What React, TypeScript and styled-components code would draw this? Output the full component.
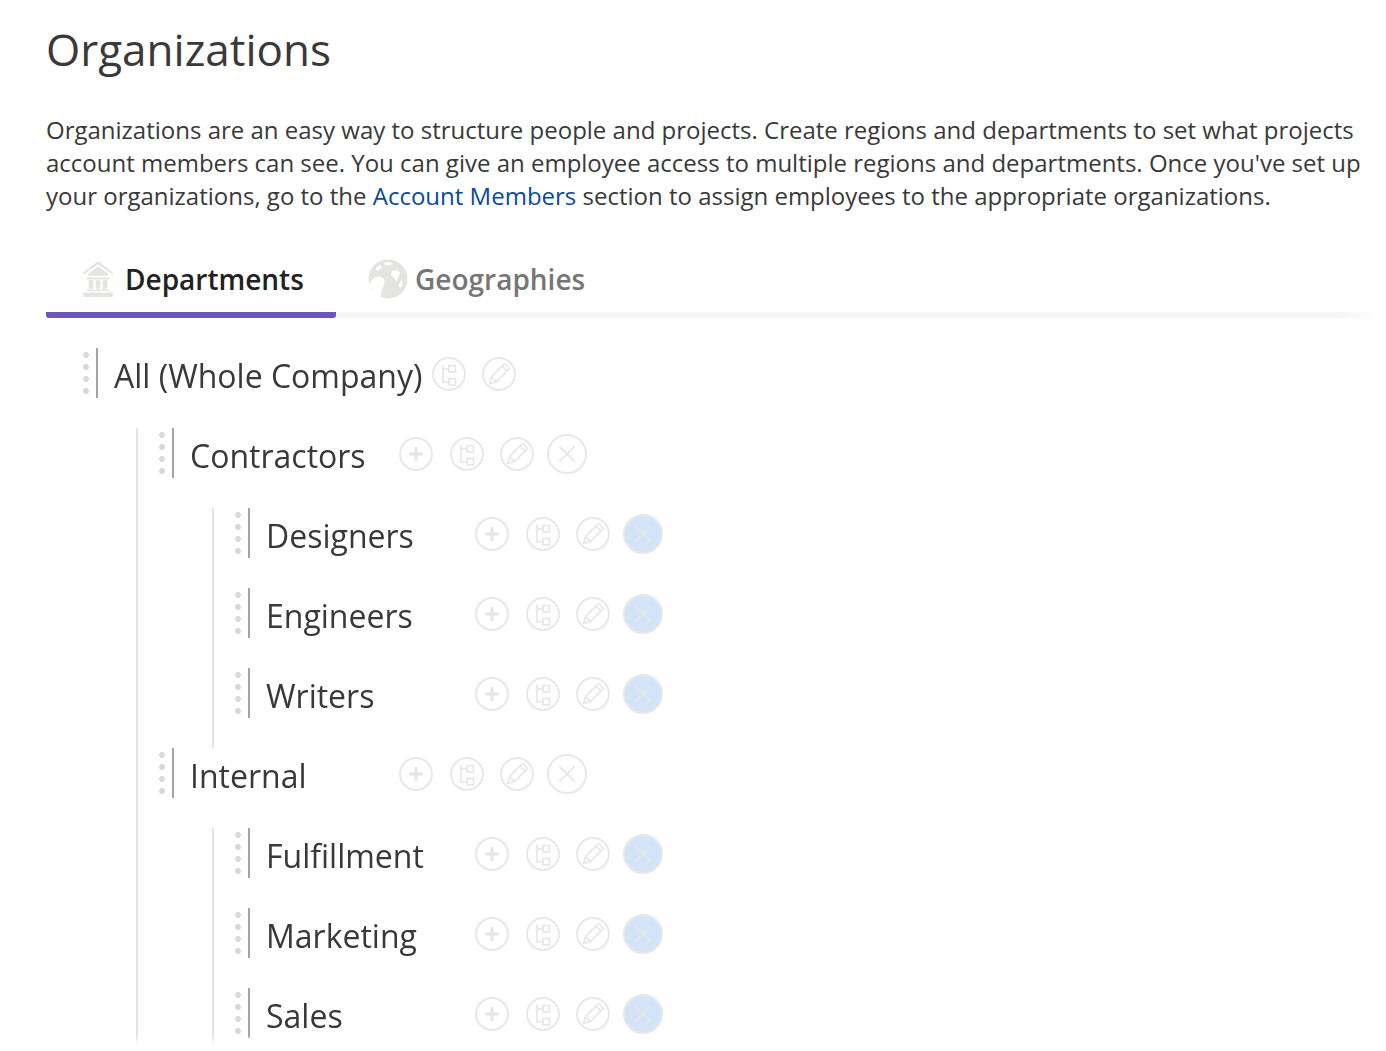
import React from "react";
import styled, { createGlobalStyle } from "styled-components";

const Global = createGlobalStyle`
  html, body { margin: 0; padding: 0; background: #fff; height: 1051px; overflow: hidden; }
  body { font-family: "Open Sans", "Liberation Sans", sans-serif; color: #393939; }
`;
const Page = styled.main`
  width: 1386px;
  padding: 21px 0 0 46px;
  box-sizing: border-box;
`;
const Title = styled.h1`
  margin: 0;
  font-size: 44px;
  line-height: 56px;
  font-weight: 400;
  color: #393939;
`;
const Intro = styled.p`
  margin: 36px 0 0;
  width: 1330px;
  font-size: 24px;
  line-height: 33px;
  color: #393939;
  white-space: nowrap;
`;
const Link = styled.a`
  color: #0b4a9c;
  text-decoration: none;
`;
const TabBar = styled.div`
  margin-top: 40px;
  width: 1334px;
  display: flex;
  height: 66px;
  box-sizing: border-box;
  background: linear-gradient(90deg, #f6f6f6 97%, #fff) bottom / 100% 6px no-repeat;
  border-radius: 3px;
`;
const Tab = styled.div<{ $active?: boolean; $w: number; $pad: number; $gap: number }>`
  width: ${(p) => p.$w}px;
  box-sizing: border-box;
  padding: 0 0 7px ${(p) => p.$pad}px;
  display: flex;
  align-items: center;
  gap: ${(p) => p.$gap}px;
  font-size: 28px;
  font-weight: 600;
  color: ${(p) => (p.$active ? "#222" : "#767676")};
  border-bottom: 6px solid ${(p) => (p.$active ? "#6b56bd" : "transparent")};
  border-radius: 3px;
`;
const Tree = styled.div`
  margin: 30px 0 0 36px;
  height: 697px;
  overflow: hidden;
  mask-image: linear-gradient(#000 calc(100% - 10px), transparent);
`;
const Guide = styled.div<{ $inner?: boolean }>`
  display: flex;
  flex-direction: column;
  gap: ${(p) => (p.$inner ? 30 : 0)}px;
  margin-left: 54px;
  padding-left: 20px;
  padding-bottom: ${(p) => (p.$inner ? 30 : 0)}px;
  border-left: 2px solid #e4e4df;
`;
const Group = styled.div`
  display: flex;
  flex-direction: column;
  gap: 30px;
`;
const Row = styled.div`
  display: flex;
  align-items: center;
  height: 50px;
`;
const Handle = styled.div`
  display: grid;
  gap: 6px;
  width: 6px;
  margin: 0 7px 0 1px;
`;
const Dot = styled.i`
  display: block;
  width: 6px;
  height: 6px;
  border-radius: 50%;
  background: #d9d9d9;
`;
const Bar = styled.div`
  width: 2px;
  height: 50px;
  background: #a3a3a3;
  margin-right: 16px;
`;
const Label = styled.span<{ $fixed?: boolean }>`
  font-size: 32px;
  line-height: 50px;
  padding-top: 6px;
  color: #393939;
  white-space: nowrap;
  width: ${(p) => (p.$fixed ? "209px" : "auto")};
`;
const Actions = styled.div<{ $root?: boolean }>`
  display: flex;
  align-items: center;
  gap: 16px;
  margin-left: ${(p) => (p.$root ? 10 : 0)}px;
  padding-top: 2px;
`;
const RoundBtn = styled.button<{ $big?: boolean; $blue?: boolean }>`
  width: ${(p) => (p.$big ? 40 : 34)}px;
  height: ${(p) => (p.$big ? 40 : 34)}px;
  margin: 0;
  padding: 0;
  border: 2px solid #e8e8e8;
  border-radius: 50%;
  background: ${(p) => (p.$blue ? "#d2e3fa" : "#fff")};
  display: flex;
  align-items: center;
  justify-content: center;
  color: #e6e6e6;
  box-sizing: border-box;
  flex: none;
`;
const AddBtn = styled(RoundBtn)`
  margin-right: 1px;
`;
const DeleteBtn = styled(RoundBtn)`
  margin-left: -3px;
`;

const Plus = () => (
  <svg width="18" height="18" viewBox="0 0 18 18"><path d="M9 2v14M2 9h14" stroke="currentColor" strokeWidth="3.2" /></svg>
);
const OrgIcon = () => (
  <svg width="20" height="24" viewBox="0 0 20 24" fill="none" stroke="currentColor" strokeWidth="1.6">
    <path d="M4 2.500v17.500h6M4 7h6" />
    <rect x="10" y="3.500" width="6.500" height="6.500" />
    <rect x="10" y="16.500" width="6.500" height="6.500" />
  </svg>
);
const Pencil = () => (
  <svg width="24" height="24" viewBox="0 0 24 24" fill="none" stroke="currentColor" strokeWidth="1.5">
    <path d="M2.500 21.500l2-7L17.500 1.500l5 5L9.500 19.500z" />
    <path d="M4.500 14.500l5 5M15 4l5 5" />
  </svg>
);
const Close = () => (
  <svg width="22" height="22" viewBox="0 0 20 20"><path d="M3 3l14 14M17 3L3 17" stroke="currentColor" strokeWidth="1.6" /></svg>
);
const Bank = () => (
  <svg width="32" height="37" viewBox="0 0 34 40" fill="#e4e4e0">
    <path d="M17 1L1 13.500v2.500L17 4.500 33 16v-2.500z" />
    <path d="M17 7L6 15v2h22v-2z" />
    <path d="M5 19h24v2H5zM7 22h5v9H7zM14.500 22h5v9h-5zM22 22h5v9h-5zM5 32h24v1.500H5zM1 35h32v5H1z" />
  </svg>
);
const Globe = () => (
  <svg width="40" height="40" viewBox="0 0 40 40">
    <circle cx="20" cy="20" r="19.500" fill="#e4e4e0" />
    <path d="M1.500 24c4-6 9-8 13-5 3 2 2 6 0 10-1 3-1 6-2 9C7 36 3 31 1.500 24zM17 3.500c3-.5 6 0 8 1l-4 2-5-1zM24 12l5-1 3 2-1 4-3 6-2-5-3-2zM33 21l2 2-1 4-2 2-1-3zM8 9l4-3 2 3-5 3z" fill="#fff" />
  </svg>
);

type Kind = "root" | "top" | "leaf";
function Node({ name, kind }: { name: string; kind: Kind }) {
  return (
    <Row>
      <Handle><Dot /><Dot /><Dot /><Dot /></Handle>
      <Bar />
      <Label $fixed={kind !== "root"}>{name}</Label>
      <Actions $root={kind === "root"}>
        {kind !== "root" && <AddBtn aria-label="add"><Plus /></AddBtn>}
        <RoundBtn aria-label="structure"><OrgIcon /></RoundBtn>
        <RoundBtn aria-label="edit"><Pencil /></RoundBtn>
        {kind !== "root" && (
          <DeleteBtn $big $blue={kind === "leaf"} aria-label="delete"><Close /></DeleteBtn>
        )}
      </Actions>
    </Row>
  );
}

const data = [
  { name: "Contractors", kids: ["Designers", "Engineers", "Writers"] },
  { name: "Internal", kids: ["Fulfillment", "Marketing", "Sales"] },
];

export default function App() {
  return (
    <Page>
      <Global />
      <Title>Organizations</Title>
      <Intro>
        Organizations are an easy way to structure people and projects. Create regions and departments to set what projects<br />
        account members can see. You can give an employee access to multiple regions and departments. Once you've set up<br />
        your organizations, go to the <Link href="#">Account Members</Link> section to assign employees to the appropriate organizations.
      </Intro>
      <TabBar>
        <Tab $active $w={290} $pad={36} $gap={11}><Bank />Departments</Tab>
        <Tab $w={300} $pad={32} $gap={7}><Globe />Geographies</Tab>
      </TabBar>
      <Tree>
        <Group>
          <Node name="All (Whole Company)" kind="root" />
          <Guide>
            {data.map((d) => (
              <Group key={d.name}>
                <Node name={d.name} kind="top" />
                <Guide $inner>
                  {d.kids.map((k) => <Node key={k} name={k} kind="leaf" />)}
                </Guide>
              </Group>
            ))}
          </Guide>
        </Group>
      </Tree>
    </Page>
  );
}
